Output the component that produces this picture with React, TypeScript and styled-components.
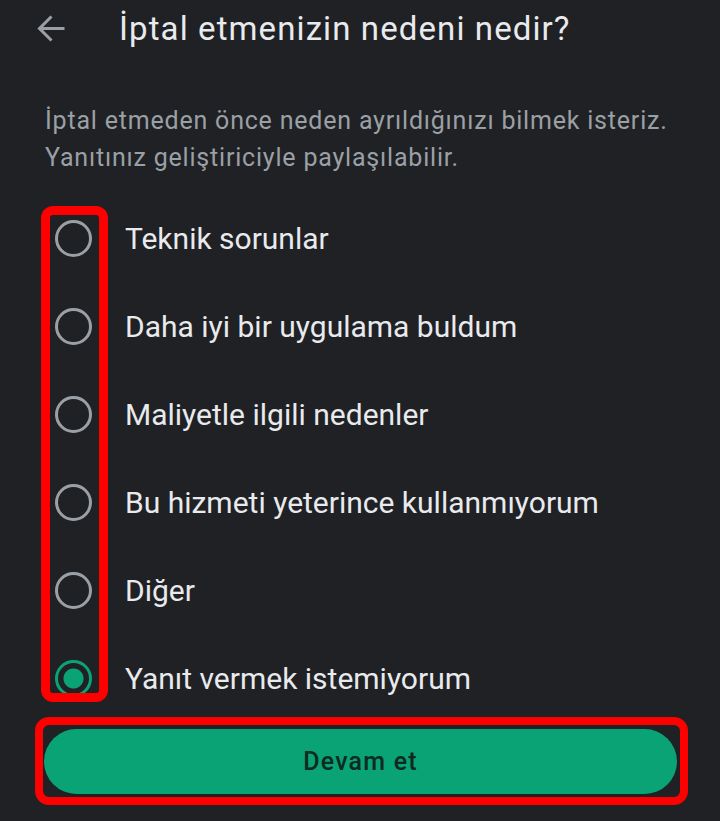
import { useState } from "react";
import styled, { createGlobalStyle } from "styled-components";

const reasons = [
  "Teknik sorunlar",
  "Daha iyi bir uygulama buldum",
  "Maliyetle ilgili nedenler",
  "Bu hizmeti yeterince kullanmıyorum",
  "Diğer",
  "Yanıt vermek istemiyorum",
];

export default function App() {
  const [selected, setSelected] = useState(reasons.length - 1);

  return (
    <>
      <GlobalStyle />
      <Page>
        <Header>
          <BackButton aria-label="Geri">
            <svg width="29" height="29" viewBox="0 0 29 29" fill="none">
              <path
                d="M27.5 14.5H3.5M14.5 2.5L2.5 14.5L14.5 26.5"
                stroke="currentColor"
                strokeWidth="3"
              />
            </svg>
          </BackButton>
          <Title>İptal etmenizin nedeni nedir?</Title>
        </Header>

        <Description>
          İptal etmeden önce neden ayrıldığınızı bilmek isteriz.
          <br />
          Yanıtınız geliştiriciyle paylaşılabilir.
        </Description>

        <OptionList>
          {reasons.map((reason, index) => (
            <OptionRow key={reason} onClick={() => setSelected(index)}>
              <Radio $checked={selected === index} />
              <OptionLabel>{reason}</OptionLabel>
            </OptionRow>
          ))}
          <Highlight />
        </OptionList>

        <ButtonFrame>
          <ContinueButton>Devam et</ContinueButton>
        </ButtonFrame>
      </Page>
    </>
  );
}

const GlobalStyle = createGlobalStyle`
  html, body {
    margin: 0;
    background: #202124;
  }
  body {
    font-family: Roboto, "Noto Sans", "Liberation Sans", sans-serif;
  }
`;

const Page = styled.div`
  width: 720px;
  height: 821px;
  overflow: hidden;
  display: flex;
  flex-direction: column;
`;

const Header = styled.div`
  height: 56px;
  display: flex;
  align-items: center;
`;

const BackButton = styled.div`
  width: 29px;
  height: 29px;
  margin-left: 37px;
  color: #9aa0a6;
  display: flex;
`;

const Title = styled.h1`
  margin: 0 0 0 53px;
  font-size: 33px;
  font-weight: 400;
  color: #e8eaed;
  letter-spacing: 1.1px;
`;

const Description = styled.p`
  margin: 46px 0 0 45px;
  font-size: 25px;
  line-height: 37px;
  letter-spacing: 0.8px;
  color: #9aa0a6;
`;

const OptionList = styled.div`
  position: relative;
  margin-top: 22px;
  display: flex;
  flex-direction: column;
  gap: 8px;
`;

const OptionRow = styled.div`
  height: 80px;
  display: flex;
  align-items: center;
  cursor: pointer;
`;

const Radio = styled.span<{ $checked: boolean }>`
  box-sizing: border-box;
  width: 37px;
  height: 37px;
  margin-left: 55px;
  border-radius: 50%;
  border: 3px solid ${({ $checked }) => ($checked ? "#0aa376" : "#9aa0a6")};
  background: ${({ $checked }) =>
    $checked ? "radial-gradient(circle, #0aa376 9.5px, transparent 10.5px)" : "none"};
  flex-shrink: 0;
`;

const OptionLabel = styled.span`
  margin-left: 33px;
  font-size: 30px;
  color: #e8eaed;
`;

const Highlight = styled.div`
  position: absolute;
  left: 41px;
  top: 8px;
  width: 67px;
  height: 496px;
  box-sizing: border-box;
  border: 9px solid #ff0000;
  border-radius: 12px;
  pointer-events: none;
`;

const ButtonFrame = styled.div`
  box-sizing: border-box;
  width: 653px;
  margin: -1px 0 0 35px;
  padding: 4px 3px 3px 1px;
  border: 8px solid #ff0000;
  border-radius: 14px;
`;

const ContinueButton = styled.button`
  width: 100%;
  height: 65px;
  border: none;
  border-radius: 33px;
  background: #0aa376;
  color: #0f2a20;
  font-family: Roboto, "Noto Sans", sans-serif;
  font-size: 25px;
  font-weight: 500;
  letter-spacing: 1.2px;
  cursor: pointer;
`;
